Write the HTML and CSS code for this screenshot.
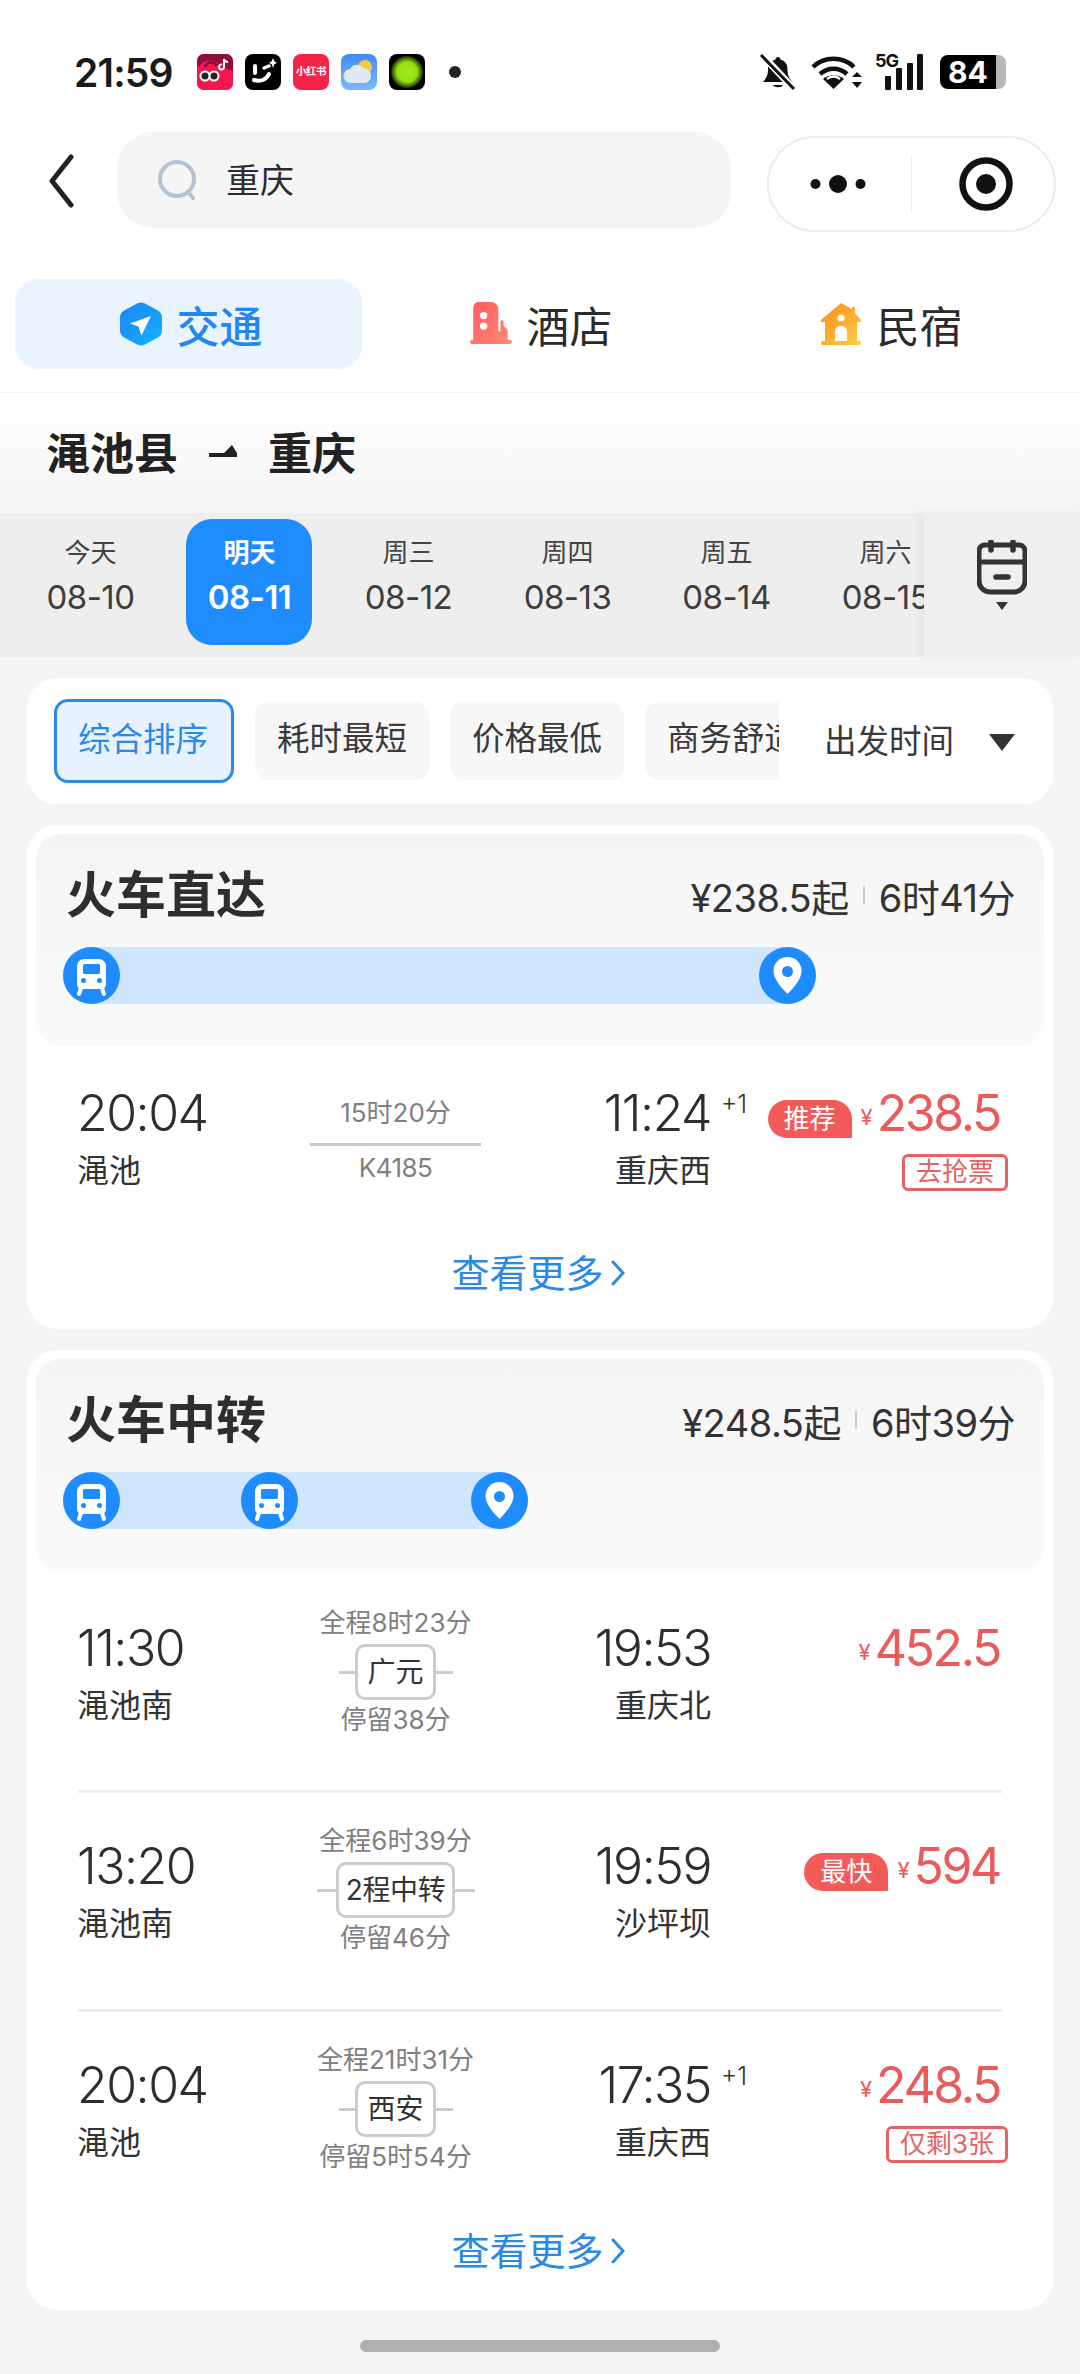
FILE: index.html
```html
<!DOCTYPE html>
<html lang="zh-CN">
<head>
<meta charset="utf-8">
<title>重庆</title>
<link rel="stylesheet" href="styles.css">
</head>
<body>
<svg class="defs" width="0" height="0" aria-hidden="true">
  <defs>
    <symbol id="train" viewBox="0 0 57 57">
      <circle cx="28.5" cy="28.5" r="28.5" fill="#1e8cff"/>
      <path d="M22 12h13c5 0 8 3 8 8v17c0 3-2 5-5 5H19c-3 0-5-2-5-5V20c0-5 3-8 8-8z" fill="#fff"/>
      <rect x="20" y="17" width="17" height="10" rx="1.5" fill="#1e8cff"/>
      <circle cx="20.500" cy="33.500" r="2.500" fill="#1e8cff"/>
      <circle cx="36.500" cy="33.500" r="2.500" fill="#1e8cff"/>
      <path d="M18 41l-2 6M39 41l2 6" stroke="#fff" stroke-width="4" stroke-linecap="round"/>
    </symbol>
    <symbol id="pin" viewBox="0 0 57 57">
      <circle cx="28.500" cy="28.500" r="28.500" fill="#1e8cff"/>
      <path d="M28.500 10c8 0 14 6 14 14 0 8-8 17-14 23-6-6-14-15-14-23 0-8 6-14 14-14z" fill="#fff"/>
      <circle cx="28.500" cy="24.500" r="5.500" fill="#1e8cff"/>
    </symbol>
  </defs>
</svg>

<header class="top">
  <div class="status">
    <span class="clock">21:59</span>
    <div class="apps">
      <svg class="app" viewBox="0 0 36 36"><rect width="36" height="36" rx="7" fill="#f0184f"/><path d="M0 12V7a7 7 0 0 1 7-7h22a7 7 0 0 1 7 7v11z" fill="#8c0f3a"/><path d="M2 14C4 5 19 3 23 12L36 17V29a7 7 0 0 1-7 7H7a7 7 0 0 1-7-7V14z" fill="#f0184f"/><path d="M8 13C10 7 17 7 20 12" fill="none" stroke="#8c0f3a" stroke-width="3"/><circle cx="8" cy="22" r="5.500" fill="#fff"/><circle cx="17" cy="22" r="5.500" fill="#fff"/><circle cx="8" cy="22" r="3.500" fill="#222"/><circle cx="17" cy="22" r="3.500" fill="#222"/><path d="M27 5v8a2.500 2.500 0 1 1-2-2.400M27 5c.5 2 2 3 4 3" fill="none" stroke="#fff" stroke-width="2"/></svg>
      <svg class="app" viewBox="0 0 36 36"><rect width="36" height="36" rx="8" fill="#000"/><path d="M10 12v7" stroke="#fff" stroke-width="4" stroke-linecap="round"/><path d="M9 26c6 2 12 0 15-6" fill="none" stroke="#fff" stroke-width="4" stroke-linecap="round"/><path d="M19 14l5-2" stroke="#fff" stroke-width="3.500" stroke-linecap="round"/><path d="M28 4l1.300 3.200L32 9l-2.700 1.300L28 14l-1.300-3.700L24 9l2.700-1.800z" fill="#fff"/></svg>
      <span class="app app-red">小红书</span>
      <svg class="app" viewBox="0 0 36 36"><defs><linearGradient id="sky" x1="0" y1="0" x2="0" y2="1"><stop offset="0" stop-color="#3f8cf0"/><stop offset="1" stop-color="#7ab8fb"/></linearGradient></defs><rect width="36" height="36" rx="8" fill="url(#sky)"/><circle cx="24" cy="13" r="7" fill="#f7c843"/><path d="M10 29a7 7 0 0 1-1-14c2-5 10-6 13-1 5 0 8 4 8 8s-3 7-7 7z" fill="#dfe9f2"/></svg>
      <svg class="app" viewBox="0 0 36 36"><defs><radialGradient id="glow"><stop offset="0" stop-color="#a4ec12"/><stop offset=".62" stop-color="#97e012"/><stop offset="1" stop-color="#1a3300"/></radialGradient></defs><rect width="36" height="36" rx="8" fill="#000"/><circle cx="18" cy="18" r="16" fill="url(#glow)"/></svg>
      <span class="dot"></span>
    </div>
    <div class="sys">
      <svg class="bell" viewBox="0 0 36 36"><path d="M18 3c1.500 0 2.500 1 2.500 2.500 5 1.500 7 5 7 10 0 6 2 9 5 12.500H3c3-3.500 5-6.500 5-12.500 0-5 2-8.500 7.500-10C15.500 4 16.500 3 18 3z" fill="#111"/><path d="M13 31c1 3 9 3 10 0z" fill="#111"/><path d="M2 1l32 34" stroke="#fff" stroke-width="7"/><path d="M1 1l33 34" stroke="#111" stroke-width="3"/></svg>
      <svg class="wifi" viewBox="0 0 52 36"><path d="M2 13C13 2 32 2 43 13M9 20c8-7 19-7 27 0" fill="none" stroke="#111" stroke-width="4.500"/><path d="M22.500 35L12 25c6-5 15-5 21 0z" fill="#111"/><path d="M16 25c4-3 9-3 13 0" fill="none" stroke="#fff" stroke-width="2.500"/><path d="M41 23l5-5 5 5zM41 28l5 6 5-6z" fill="#111"/></svg>
      <div class="cell">
        <span class="fiveg">5G</span>
        <svg class="bars" viewBox="0 0 38 36"><rect x="0" y="22" width="6" height="14" rx="1" fill="#111"/><rect x="11" y="14" width="6" height="22" rx="1" fill="#111"/><rect x="22" y="9" width="6" height="27" rx="1" fill="#111"/><rect x="32" y="0" width="6" height="36" rx="1" fill="#111"/></svg>
      </div>
      <div class="battery"><span class="level">84</span><span class="tip"></span></div>
    </div>
  </div>

  <nav class="nav">
    <svg class="back" viewBox="0 0 26 54"><path d="M23 3L4 27l19 24" fill="none" stroke="#222" stroke-width="5" stroke-linecap="round" stroke-linejoin="round"/></svg>
    <div class="search">
      <svg class="lens" viewBox="0 0 42 42"><circle cx="20" cy="20" r="17" fill="none" stroke="#b7c1d4" stroke-width="4"/><path d="M31 33l5 6" stroke="#b7c1d4" stroke-width="4" stroke-linecap="round"/></svg>
      <span class="query">重庆</span>
    </div>
    <div class="capsule">
      <div class="cap-cell">
        <svg class="more-dots" viewBox="0 0 56 20"><circle cx="5.500" cy="10" r="5" fill="#111"/><circle cx="28" cy="10" r="9" fill="#111"/><circle cx="50.500" cy="10" r="5" fill="#111"/></svg>
      </div>
      <span class="cap-sep"></span>
      <div class="cap-cell">
        <svg class="target" viewBox="0 0 54 54"><circle cx="27" cy="27" r="23.500" fill="none" stroke="#111" stroke-width="6.500"/><circle cx="27" cy="27" r="10" fill="#111"/></svg>
      </div>
    </div>
  </nav>

  <div class="tabs">
    <div class="tab tab-on">
      <svg class="tab-ico" viewBox="0 0 42 44"><defs><linearGradient id="hexg" x1="0" y1="0" x2="1" y2="1"><stop offset="0" stop-color="#1e82f5"/><stop offset="1" stop-color="#12b4ff"/></linearGradient></defs><path d="M17 1.500c2.500-1.300 5.500-1.300 8 0L37 8c3 1.500 5 4 5 7.500v13c0 3.500-2 6-5 7.500l-12 6.500c-2.500 1.300-5.500 1.300-8 0L5 36c-3-1.500-5-4-5-7.500v-13C0 12 2 9.500 5 8z" fill="url(#hexg)"/><path d="M31 14L10 21.500l8.500 3 3 9z" fill="#fff"/></svg>
      <span>交通</span>
    </div>
    <div class="tab">
      <svg class="tab-ico" viewBox="0 0 40 42"><defs><linearGradient id="hotg" x1="0" y1="0" x2="1" y2="1"><stop offset="0" stop-color="#ff5a5f"/><stop offset="1" stop-color="#ff8a78"/></linearGradient></defs><path d="M8 0h12c4 0 7 3 7 7v21h2v-9c0-2 3-2 3 0v3c0 2 4 3 4 6v8h2c1 0 2 1 2 2s-1 2-2 2H2c-1 0-2-1-2-2s1-2 2-2h1V7c0-4 2-7 5-7z" fill="url(#hotg)"/><circle cx="13" cy="13" r="3.500" fill="#fff"/><circle cx="13" cy="23" r="3.500" fill="#fff"/></svg>
      <span>酒店</span>
    </div>
    <div class="tab">
      <svg class="tab-ico" viewBox="0 0 42 42"><defs><linearGradient id="houg" x1="0" y1="0" x2="1" y2="1"><stop offset="0" stop-color="#ff8a1f"/><stop offset="1" stop-color="#ffd040"/></linearGradient></defs><path d="M21 0l11 6V4h3v6l6 7c.5 1 0 2-1 2h-3v19h2c1 0 2 .5 2 2s-1 2-2 2H3c-1 0-2-.5-2-2s1-2 2-2h2V19H2c-1 0-1.500-1-1-2z" fill="url(#houg)"/><circle cx="21" cy="15" r="3.500" fill="#fff"/><path d="M15 38V28c0-3 3-5 6-5s6 2 6 5v10z" fill="#fff"/></svg>
      <span>民宿</span>
    </div>
  </div>
</header>

<section class="route">
  <span>渑池县</span>
  <svg class="route-arrow" viewBox="0 0 28 12"><path d="M0 8h28v4H0zM15 8l8-8 5 8z" fill="#222"/></svg>
  <span>重庆</span>
</section>

<section class="dates">
  <div class="date"><span class="d-top">今天</span><span class="d-num">08-10</span></div>
  <div class="date date-on"><span class="d-top">明天</span><span class="d-num">08-11</span></div>
  <div class="date"><span class="d-top">周三</span><span class="d-num">08-12</span></div>
  <div class="date"><span class="d-top">周四</span><span class="d-num">08-13</span></div>
  <div class="date"><span class="d-top">周五</span><span class="d-num">08-14</span></div>
  <div class="date"><span class="d-top">周六</span><span class="d-num">08-15</span></div>
  <div class="cal">
    <svg class="cal-ico" viewBox="0 0 50 74"><path d="M8 5h34a6 6 0 0 1 6 6v30a11 11 0 0 1-11 11H13A11 11 0 0 1 2 41V11a6 6 0 0 1 6-6z" fill="none" stroke="#333" stroke-width="5"/><path d="M2 22h46" stroke="#333" stroke-width="5"/><path d="M14 2v8M36 2v8" stroke="#333" stroke-width="5.500" stroke-linecap="round"/><path d="M19 37h12" stroke="#333" stroke-width="5.500" stroke-linecap="round"/><path d="M19 62h12l-6 8z" fill="#333"/></svg>
  </div>
</section>

<section class="filter">
  <div class="chips">
    <span class="chip chip-on">综合排序</span>
    <span class="chip">耗时最短</span>
    <span class="chip">价格最低</span>
    <span class="chip">商务舒适</span>
  </div>
  <div class="depart">
    <span class="depart-label">出发时间</span>
    <svg class="caret" viewBox="0 0 26 17"><path d="M0 0h26L13 17z" fill="#333"/></svg>
  </div>
</section>

<section class="card">
  <div class="head">
    <div class="head-row">
      <h2 class="title">火车直达</h2>
      <div class="summary"><span>¥238.5起</span><i class="sum-sep"></i><span>6时41分</span></div>
    </div>
    <div class="bar bar-direct">
      <svg class="stop"><use href="#train"/></svg>
      <svg class="stop"><use href="#pin"/></svg>
    </div>
  </div>
  <div class="row row-direct">
    <div class="col-a"><span class="time">20:04</span><span class="station">渑池</span></div>
    <div class="col-b col-direct"><span class="dur">15时20分</span><span class="rule"></span><span class="code">K4185</span></div>
    <div class="col-c"><span class="time"><span class="t-wrap">11:24<sup class="plus">+1</sup></span></span><span class="station">重庆西</span></div>
    <div class="col-d">
      <div class="price-line"><span class="tag">推荐</span><span class="yen">¥</span><span class="price">238.5</span></div>
      <span class="note">去抢票</span>
    </div>
  </div>
  <div class="more">查看更多<svg class="more-chev" viewBox="0 0 16 26"><path d="M3 2l10 11L3 24" fill="none" stroke="#2a8ae6" stroke-width="3" stroke-linecap="round"/></svg></div>
</section>

<section class="card card-2">
  <div class="head">
    <div class="head-row">
      <h2 class="title">火车中转</h2>
      <div class="summary"><span>¥248.5起</span><i class="sum-sep"></i><span>6时39分</span></div>
    </div>
    <div class="bar bar-transfer">
      <svg class="stop"><use href="#train"/></svg>
      <svg class="stop stop-mid"><use href="#train"/></svg>
      <svg class="stop stop-end"><use href="#pin"/></svg>
    </div>
  </div>
  <div class="row row-first">
    <div class="col-a"><span class="time">11:30</span><span class="station">渑池南</span></div>
    <div class="col-b"><span class="dur">全程8时23分</span><span class="via"><b class="via-box">广元</b></span><span class="dur">停留38分</span></div>
    <div class="col-c"><span class="time">19:53</span><span class="station">重庆北</span></div>
    <div class="col-d"><div class="price-line"><span class="yen">¥</span><span class="price">452.5</span></div></div>
  </div>
  <div class="row">
    <div class="col-a"><span class="time">13:20</span><span class="station">渑池南</span></div>
    <div class="col-b"><span class="dur">全程6时39分</span><span class="via via-wide"><b class="via-box">2程中转</b></span><span class="dur">停留46分</span></div>
    <div class="col-c"><span class="time">19:59</span><span class="station">沙坪坝</span></div>
    <div class="col-d"><div class="price-line"><span class="tag">最快</span><span class="yen">¥</span><span class="price">594</span></div></div>
  </div>
  <div class="row row-last">
    <div class="col-a"><span class="time">20:04</span><span class="station">渑池</span></div>
    <div class="col-b"><span class="dur">全程21时31分</span><span class="via"><b class="via-box">西安</b></span><span class="dur">停留5时54分</span></div>
    <div class="col-c"><span class="time"><span class="t-wrap">17:35<sup class="plus">+1</sup></span></span><span class="station">重庆西</span></div>
    <div class="col-d">
      <div class="price-line"><span class="yen">¥</span><span class="price">248.5</span></div>
      <span class="note">仅剩3张</span>
    </div>
  </div>
  <div class="more">查看更多<svg class="more-chev" viewBox="0 0 16 26"><path d="M3 2l10 11L3 24" fill="none" stroke="#2a8ae6" stroke-width="3" stroke-linecap="round"/></svg></div>
</section>

<div class="home"><span class="home-bar"></span></div>
</body>
</html>
```
FILE: styles.css
```css
* { box-sizing: border-box; }
html, body { margin: 0; padding: 0; }
body {
  width: 1080px;
  height: 2374px;
  overflow: hidden;
  background: #f5f5f5;
  color: #2b2b2b;
  font-family: Inter, "Noto Sans CJK SC", "Noto Sans", sans-serif;
}
.defs { position: absolute; }

.top { background: #fff; height: 392px; }
.status {
  height: 132px;
  padding: 12px 74px 0 74px;
  display: flex;
  align-items: center;
}
.clock { font-size: 39px; font-weight: 600; color: #1a1a1a; width: 123px; letter-spacing: -.8px; }
.apps { display: flex; align-items: center; gap: 12px; }
.app { width: 36px; height: 36px; display: block; }
.app-red {
  background: #f5234a;
  border-radius: 8px;
  color: #fff;
  font-size: 10.500px;
  font-weight: 700;
  line-height: 36px;
  text-align: center;
  white-space: nowrap;
  letter-spacing: -.5px;
}
.dot { width: 12px; height: 12px; border-radius: 50%; background: #222; margin-left: 12px; }
.sys { margin-left: auto; display: flex; align-items: center; }
.bell { width: 36px; height: 36px; margin-right: 15px; }
.wifi { width: 52px; height: 36px; margin-right: 12px; }
.cell { position: relative; width: 48px; height: 36px; margin-right: 17px; }
.fiveg { position: absolute; left: 0; top: -3px; font-size: 18px; font-weight: 700; line-height: 20px; letter-spacing: -1px; color: #111; }
.bars { position: absolute; right: 0; top: 0; width: 38px; height: 36px; }
.battery { display: flex; align-items: center; }
.level {
  width: 56px;
  height: 34px;
  background: #000;
  color: #fff;
  border-radius: 8px 0 0 8px;
  font-size: 30px;
  font-weight: 700;
  line-height: 34px;
  text-align: center;
}
.tip { width: 10px; height: 34px; background: #b8b8b8; border-radius: 0 8px 8px 0; }

.nav { display: flex; align-items: flex-start; height: 100px; padding-left: 48px; }
.back { width: 26px; height: 54px; margin-top: 22px; }
.search {
  width: 614px;
  height: 96px;
  margin-left: 43px;
  border-radius: 36px;
  background: #f5f5f5;
  display: flex;
  align-items: center;
  padding-left: 40px;
}
.lens { width: 42px; height: 42px; }
.query { margin: 0 0 3px 27px; font-size: 34px; color: #2b2b2b; }
.capsule {
  width: 289px;
  height: 96px;
  margin: 4px 0 0 36px;
  border: 2px solid #ececec;
  border-radius: 48px;
  display: flex;
  align-items: center;
}
.cap-cell { flex: 1; display: flex; justify-content: center; align-items: center; }
.more-dots { width: 56px; height: 20px; margin-left: -4px; }
.target { width: 54px; height: 54px; margin-right: -6px; }
.cap-sep { width: 1px; height: 58px; background: #ececec; }

.tabs { display: flex; gap: 3px; margin-top: 47px; padding: 0 15px; }
.tab {
  width: 347px;
  height: 90px;
  border-radius: 24px;
  display: flex;
  align-items: center;
  justify-content: center;
  gap: 15px;
  padding-left: 5px;
  font-size: 43px;
  color: #2b2b2b;
}
.tab-on { background: #eaf4ff; color: #2287ee; font-weight: 500; }
.tab-ico { width: 42px; height: 44px; flex: none; }

.route {
  height: 121px;
  padding: 0 0 4px 46px;
  display: flex;
  align-items: center;
  border-top: 1px solid #f3f3f3;
  background: linear-gradient(#fff, #f5f5f5);
  font-size: 44px;
  font-weight: 700;
  color: #222;
}
.route-arrow { width: 28px; height: 12px; margin: 0 31px; }

.dates {
  position: relative;
  height: 144px;
  background: #eeeeee;
  display: flex;
  padding-left: 11px;
}
.date {
  flex: none;
  width: 159px;
  display: flex;
  flex-direction: column;
  align-items: center;
  padding-top: 20px;
  color: #444;
}
.d-top { font-size: 26px; line-height: 40px; color: #444; }
.d-num { font-size: 33px; line-height: 48px; color: #3d3d3d; letter-spacing: -.5px; }
.date-on { position: relative; color: #fff; z-index: 0; }
.date-on::before {
  content: "";
  position: absolute;
  z-index: -1;
  left: 16px;
  top: 6px;
  width: 126px;
  height: 126px;
  border-radius: 26px;
  background: #1e8cff;
}
.date-on .d-top, .date-on .d-num { color: #fff; font-weight: 600; }
.cal {
  position: absolute;
  right: 0;
  top: 0;
  bottom: 0;
  width: 156px;
  background: #efefef;
  box-shadow: -4px 0 8px rgba(0,0,0,.04);
  display: flex;
  justify-content: center;
  padding-top: 27px;
}
.cal-ico { width: 50px; height: 74px; }

.filter {
  margin: 21px 27px 0;
  height: 126px;
  background: #fff;
  border-radius: 30px;
  display: flex;
  align-items: center;
  padding-left: 27px;
}
.chips { display: flex; align-items: center; gap: 21px; width: 725px; overflow: hidden; }
.chip {
  flex: none;
  width: 174px;
  height: 78px;
  border-radius: 14px;
  background: #f7f7f7;
  font-size: 32.500px;
  line-height: 74px;
  text-align: center;
  color: #3a3a3a;
}
.chip-on {
  width: 180px;
  height: 84px;
  line-height: 75px;
  padding-right: 2px;
  background: #e6f2ff;
  border: 3px solid #2a8ae6;
  color: #2a8ae6;
}
.depart { display: flex; align-items: center; margin-left: 45px; font-size: 32.500px; color: #3a3a3a; }
.depart-label { margin-bottom: 6px; }
.caret { width: 26px; height: 17px; margin: 3px 0 0 35px; }

.card {
  margin: 21px 27px 0;
  height: 504px;
  background: #fff;
  border-radius: 30px;
  padding: 9px 9px 0;
}
.card-2 { height: 960px; }
.head {
  height: 212px;
  border-radius: 24px;
  background: linear-gradient(#f5f5f5, #fafafa);
  padding: 26px 29px 0 27px;
}
.head-row { display: flex; align-items: center; justify-content: space-between; height: 70px; padding-left: 3px; }
.title { margin: 0; font-size: 50px; font-weight: 700; color: #2e2e2e; line-height: 70px; }
.summary { display: flex; align-items: center; font-size: 38px; color: #333; letter-spacing: -.5px; }
.sum-sep { display: block; width: 2px; height: 18px; background: #ccc; margin: 0 14px; }
.bar {
  display: flex;
  height: 57px;
  margin-top: 17px;
  background: #d0e6ff;
  border-radius: 29px;
}
.bar-direct { width: 753px; justify-content: space-between; }
.bar-transfer { width: 465px; }
.stop { width: 57px; height: 57px; flex: none; display: block; }
.stop-mid { margin-left: 121px; }
.stop-end { margin-left: auto; }

.row {
  display: grid;
  grid-template-columns: 212px 210px 212px 1fr;
  height: 219px;
  margin: 0 42px;
  padding-top: 30px;
  border-bottom: 3px solid #eeeeee;
}
.row-first { height: 222px; padding-top: 34px; }
.row-direct { height: 169px; padding-top: 37px; border-bottom: 0; }
.row-last { height: 181px; border-bottom: 0; }
.col-a, .col-c, .col-d { padding-top: 13px; display: flex; flex-direction: column; }
.row-direct .col-a, .row-direct .col-c, .row-direct .col-d { padding-top: 0; }
.col-a { margin-left: -1px; }
.col-c { align-items: flex-end; padding-right: 1px; }
.col-d { align-items: flex-end; }
.time { display: block; font-size: 50px; line-height: 60px; font-weight: 300; color: #2e2e2e; letter-spacing: -1.500px; }
.t-wrap { position: relative; display: block; }
.plus { position: absolute; left: 100%; top: 1px; margin-left: 10px; font-size: 25px; line-height: 40px; font-weight: 300; vertical-align: baseline; letter-spacing: 0; color: #333; }
.station { display: block; margin-top: 6px; font-size: 32px; line-height: 44px; color: #333; }

.col-b { display: flex; flex-direction: column; align-items: center; color: #808080; margin-left: 1px; }
.dur { font-size: 26px; line-height: 36px; color: #808080; white-space: nowrap; }
.col-direct .dur { line-height: 60px; }
.rule { display: block; width: 171px; height: 3px; background: #c8c8c8; }
.code { font-size: 26px; line-height: 44px; color: #808080; letter-spacing: -.5px; }
.via { position: relative; display: block; margin: 3px 0 2px; width: 114px; height: 56px; text-align: center; }
.via::before {
  content: "";
  position: absolute;
  left: 0;
  right: 0;
  top: 27px;
  height: 3px;
  background: #cccccc;
}
.via-wide { width: 158px; }
.via-box {
  position: relative;
  display: inline-block;
  height: 56px;
  padding: 0 9px;
  border: 3px solid #cccccc;
  border-radius: 10px;
  background: #fff;
  font-size: 28px;
  line-height: 50px;
  font-weight: 400;
  color: #333;
  white-space: nowrap;
}
.via-wide .via-box { padding: 0 7px; letter-spacing: -.4px; }

.price-line { display: flex; align-items: center; height: 60px; padding-right: 2px; color: #ea5b5b; }
.tag {
  width: 84px;
  height: 38px;
  margin: 12px 9px 0 0;
  background: #f55a5a;
  border-radius: 19px 19px 0 19px;
  color: #fff;
  font-size: 26px;
  line-height: 38px;
  text-align: center;
}
.yen { font-size: 22px; margin: 8px 4px 0 0; }
.price { font-size: 50px; font-weight: 400; letter-spacing: -2.400px; line-height: 60px; }
.note {
  margin: 11px -6px 0 0;
  height: 37px;
  padding: 0 11px;
  border: 3px solid #e46464;
  border-radius: 6px;
  color: #e46464;
  font-size: 26px;
  line-height: 29px;
  white-space: nowrap;
}

.more {
  height: 114px;
  display: flex;
  align-items: center;
  justify-content: center;
  font-size: 38px;
  color: #2a8ae6;
  padding: 0 3px 3px 0;
}
.more-chev { width: 16px; height: 26px; margin-left: 6px; margin-top: 4px; }

.home { display: flex; justify-content: center; padding-top: 30px; }
.home-bar { display: block; width: 360px; height: 12px; border-radius: 6px; background: #b0b0b0; }
```
